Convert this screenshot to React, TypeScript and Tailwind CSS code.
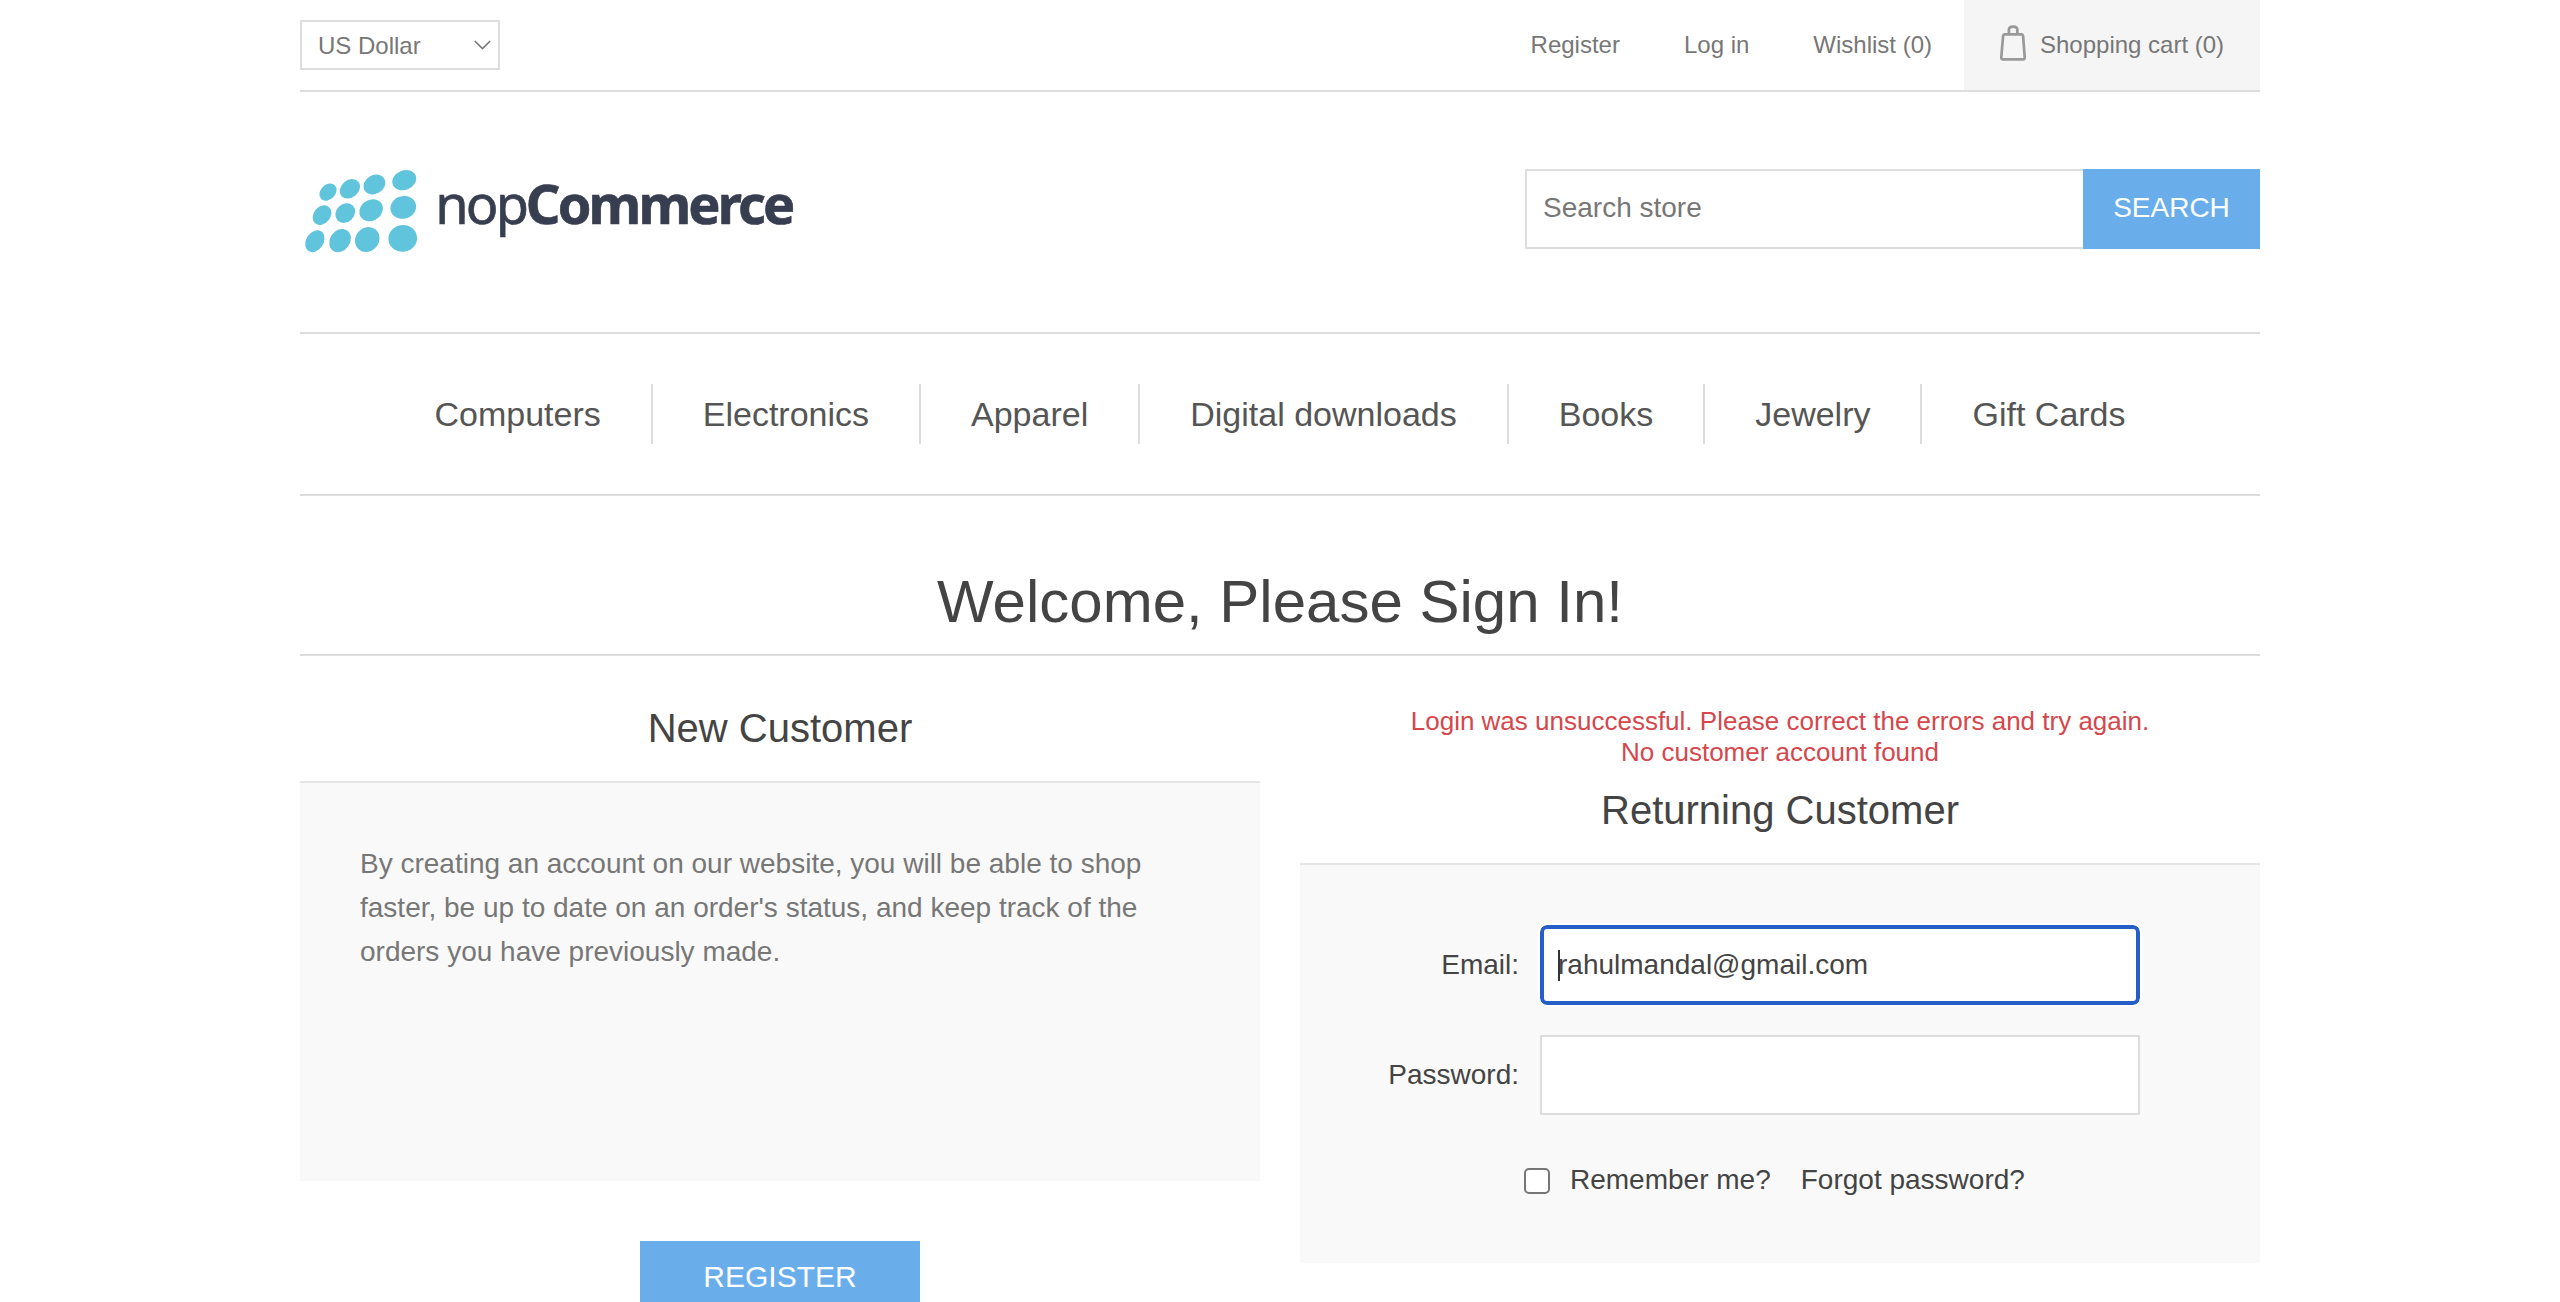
import React from "react";

const categories = ["Computers", "Electronics", "Apparel", "Digital downloads", "Books", "Jewelry", "Gift Cards"];

// cx, cy, rx, ry, rotation
const dots: number[][] = [
  [114.5, 127, 28, 21, -45],
  [180.5, 117, 32, 25, -40],
  [254.5, 104, 33, 27, -30],
  [344.5, 91, 36, 28, -22],
  [96.5, 196.5, 31, 24, -50],
  [166.5, 190, 31, 26, -45],
  [244.5, 181.5, 36, 30, -35],
  [341.5, 173, 38, 32.5, -15],
  [75, 275, 34, 25, -58],
  [151, 273, 36, 29, -55],
  [233, 270, 38, 34, -50],
  [340, 266.5, 42, 39, -10],
];

function Logo() {
  return (
    <svg className="h-[120px] w-[520px] overflow-visible blur-[0.6px]" viewBox="0 0 1568 361.8">
      {dots.map(([cx, cy, rx, ry, r]) => (
        <ellipse key={`${cx}-${cy}`} cx={cx} cy={cy} rx={rx + 1.2} ry={ry + 1.2} transform={`rotate(${r} ${cx} ${cy})`} fill="#60c4dd" />
      ))}
      <g fill="#373e50" stroke="#373e50" strokeWidth="2" fontFamily='"Noto Sans", sans-serif' fontSize="163">
        <text x="438" y="224.5" letterSpacing="-8.5">nop</text>
        <text x="711" y="224.5" fontWeight="700" letterSpacing="-8.6">Commerce</text>
      </g>
    </svg>
  );
}

function Header() {
  return (
    <header>
      <div className="flex h-[92px] items-stretch border-b-2 border-[#ddd] text-[24px] text-[#777]">
        <button className="mt-5 flex h-[50px] w-[200px] items-center justify-between border-2 border-[#ddd] pr-[7px] pl-4">
          <span className="pt-px leading-[28px]">US Dollar</span>
          <svg className="h-[10px] w-[17px]" viewBox="0 0 17 10" fill="none" stroke="#777" strokeWidth="1.6">
            <path d="M0.8 1 L8.5 8.6 L16.2 1" />
          </svg>
        </button>
        <nav className="ml-auto flex items-center gap-16 pr-8">
          <a>Register</a>
          <a>Log in</a>
          <a>Wishlist (0)</a>
        </nav>
        <a className="flex w-[296px] items-center bg-[#f5f5f5] pl-9">
          <svg className="mb-[5px] h-[36px] w-[26px]" viewBox="0 0 26 36" fill="none" stroke="#999" strokeWidth="2.7" strokeLinejoin="round">
            <path d="M4.6 9.4 H21.6 C22.6 9.4 23 10 23.1 10.8 L24.7 32.2 C24.8 33.6 24.2 34.3 23 34.3 H3 C1.8 34.3 1.2 33.6 1.3 32.2 L3.1 10.8 C3.2 10 3.6 9.4 4.6 9.4 Z" />
            <path d="M8.9 9 V4.8 C8.9 2.6 10.2 1.6 13.1 1.6 C16 1.6 17.3 2.6 17.3 4.8 V9" />
          </svg>
          <span className="ml-[14px]">Shopping cart (0)</span>
        </a>
      </div>
      <div className="flex h-[242px] items-start justify-between border-b-2 border-[#ddd]">
        <div className="mt-[58px] -ml-[10px]">
          <Logo />
        </div>
        <form className="mt-[77px] flex h-20 w-[735px] text-[28px]">
          <div className="flex flex-1 items-center border-2 border-r-0 border-[#ddd] pb-[2px] pl-4 text-[#777]">Search store</div>
          <button type="button" className="w-[177px] bg-[#69aeeb] pb-[2px] text-white">SEARCH</button>
        </form>
      </div>
      <nav className="flex h-[162px] items-center justify-center border-b-2 border-[#ddd] text-[34px] text-[#555]">
        {categories.map((c, i) => (
          <a key={c} className={i === 0 ? "h-[60px] px-[50px] leading-[60px]" : "h-[60px] border-l-2 border-[#ddd] px-[50px] leading-[60px]"}>
            {c}
          </a>
        ))}
      </nav>
    </header>
  );
}

export default function App() {
  return (
    <div className="h-screen overflow-hidden bg-white font-['Liberation_Sans',Arial,sans-serif] text-[#444]">
      <div className="mx-auto w-[1960px]">
        <Header />
        <h1 className="border-b-2 border-[#ddd] pt-[54px] text-center text-[60px] leading-[104px]">Welcome, Please Sign In!</h1>
        <main className="flex gap-10">
          <section className="w-[960px] pt-[19px]">
            <h2 className="text-center text-[40px] leading-[106px]">New Customer</h2>
            <div className="h-[400px] border-t-2 border-[#e5e5e5] bg-[#f9f9f9] px-[60px] pt-[59px] text-[28px] leading-[44px] text-[#777]">
              By creating an account on our website, you will be able to shop faster, be up to date on an order's status, and keep track of the orders you have previously made.
            </div>
            <button className="mx-auto mt-[60px] block h-[71px] w-[280px] bg-[#69aeeb] text-[30px] text-white">REGISTER</button>
          </section>
          <section className="w-[960px] pt-[50px]">
            <div className="text-center text-[26px] leading-[31px] text-[#d5474c]">
              Login was unsuccessful. Please correct the errors and try again.
              <br />
              No customer account found
            </div>
            <h2 className="pb-[11px] text-center text-[40px] leading-[84px]">Returning Customer</h2>
            <div className="h-[400px] border-t-2 border-[#e5e5e5] bg-[#f9f9f9] pt-[60px] text-[28px]">
              <div className="flex items-center">
                <label className="mr-[21px] w-[219px] text-right">Email:</label>
                <div className="flex h-20 w-[600px] items-center rounded-[7px] border-4 border-[#265ec8] bg-white pl-[14px] outline-2 outline-white">
                  <span className="h-[31px] w-0 border-l-2 border-[#333]" />
                  <span className="-ml-[2px]">rahulmandal@gmail.com</span>
                </div>
              </div>
              <div className="mt-[30px] flex items-center">
                <label className="mr-[21px] w-[219px] text-right">Password:</label>
                <div className="h-20 w-[600px] border-2 border-[#ddd] bg-white" />
              </div>
              <div className="mt-[43px] flex h-[44px] items-center pl-[224px]">
                <span className="mt-[2px] h-[26px] w-[26px] rounded-[5px] border-2 border-[#767676] bg-white" />
                <span className="ml-5">Remember me?</span>
                <a className="ml-[30px]">Forgot password?</a>
              </div>
            </div>
          </section>
        </main>
      </div>
    </div>
  );
}
